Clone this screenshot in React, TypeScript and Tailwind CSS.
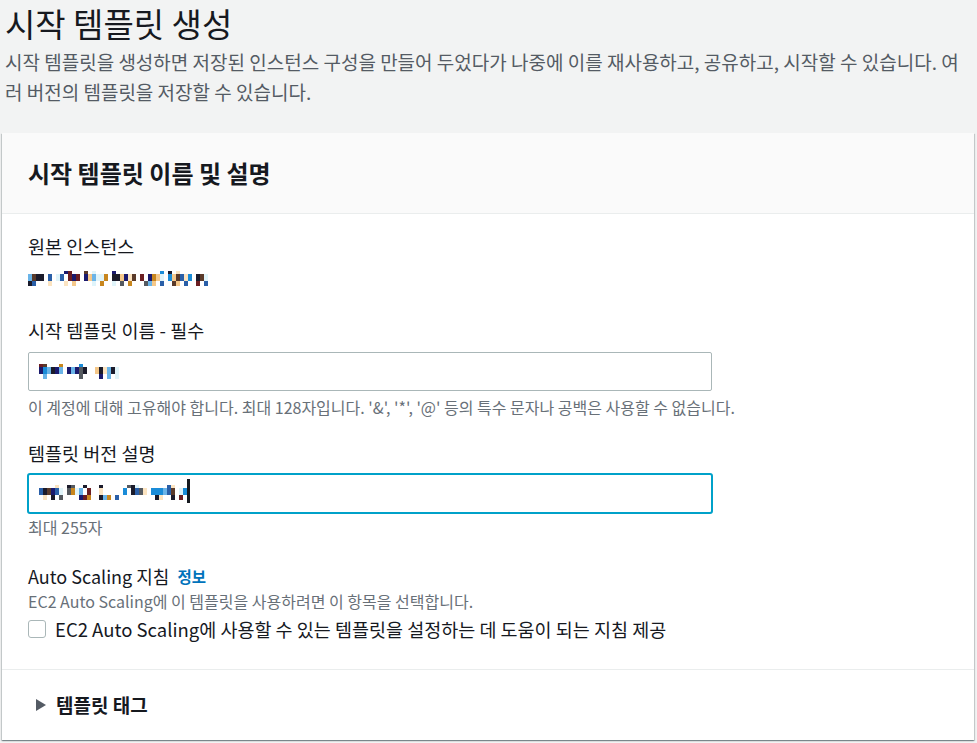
import React from 'react';

const PALETTE = [
  '#ffffff', '#1b1b2b', '#1a1a6e', '#1a8cd8', '#6ab4e8', '#f5c88a', '#c8861e',
  '#5a3a2a', '#e0f4fa', '#555a60', '#fbe3c0', '#6b1e22', '#2a5fa8', '#1b1b2b',
];

// blurred-out values in the screenshot, drawn as a little mosaic
const Mosaic: React.FC<{ seed: number; cols: number; cursor?: boolean }> = ({ seed, cols, cursor }) => {
  let s = seed;
  const rnd = () => {
    s = (s * 1103515245 + 12345) % 2147483648;
    return s / 2147483648;
  };
  const pick = () => PALETTE[Math.floor(rnd() * PALETTE.length)];
  const columns = Array.from({ length: cols }, (_, i) =>
    i % 7 === 6
      ? ['#ffffff', '#ffffff', '#ffffff']
      : [rnd() < 0.7 ? '#ffffff' : pick(), pick(), rnd() < 0.5 ? '#ffffff' : pick()],
  );
  return (
    <div className="flex items-start">
      {columns.map((c, i) => (
        <div key={i} className="flex flex-col w-[4px]">
          <div className="h-[3px]" style={{ backgroundColor: c[0] }} />
          <div className="h-[7px]" style={{ backgroundColor: c[1] }} />
          <div className="h-[5px]" style={{ backgroundColor: c[2] }} />
        </div>
      ))}
      {cursor && <div className="w-[3px] h-[24px] -mt-[6px] bg-[#16191f]" />}
    </div>
  );
};

export default function App() {
  const font = { fontFamily: '"Noto Sans CJK KR", "Noto Sans", sans-serif' };
  const label = 'text-[18.5px] leading-[24px] text-[#16191f]';
  const hint = 'text-[16px] leading-[20px] text-[#687078]';

  return (
    <div style={font} className="w-[977px] h-[743px] overflow-hidden bg-[#f2f3f3] px-[2px]">
      <h1 className="pl-[3px] text-[33px] leading-[46px] font-normal text-[#16191f]">시작 템플릿 생성</h1>
      <p className="mt-[1px] pl-[3px] pr-[10px] text-[19px] leading-[30px] text-[#545b64]">
        시작 템플릿을 생성하면 저장된 인스턴스 구성을 만들어 두었다가 나중에 이를 재사용하고, 공유하고, 시작할 수 있습니다. 여러 버전의 템플릿을 저장할 수 있습니다.
      </p>

      <div className="mt-[26px] w-[972px] bg-white shadow-[0_1px_1px_0_rgba(0,28,36,0.3),1px_1px_1px_0_rgba(0,28,36,0.15),-1px_1px_1px_0_rgba(0,28,36,0.15)]">
        <div className="h-[81px] flex items-center px-[26px] bg-[#fafafa] border-b border-[#eaeded]">
          <h2 className="text-[24px] font-bold text-[#16191f]">시작 템플릿 이름 및 설명</h2>
        </div>

        <div className="px-[26px] pt-[20px] pb-[28px]">
          <div className={label}>원본 인스턴스</div>
          <div className="mt-[13px] h-[16px]">
            <Mosaic seed={7} cols={45} />
          </div>

          <div className={`${label} mt-[31px]`}>시작 템플릿 이름 - 필수</div>
          <div className="mt-[10px] w-[684px] h-[39px] border border-[#aab7b8] rounded-[2px] flex items-center pl-[10px]">
            <Mosaic seed={31} cols={21} />
          </div>
          <div className={`${hint} mt-[6px]`}>
            이 계정에 대해 고유해야 합니다. 최대 128자입니다. '&amp;', '*', '@' 등의 특수 문자나 공백은 사용할 수 없습니다.
          </div>

          <div className={`${label} mt-[24px]`}>템플릿 버전 설명</div>
          <div className="mt-[8px] -ml-[1px] w-[686px] h-[41px] border-2 border-[#00a1c9] rounded-[3px] flex items-center pl-[10px]">
            <Mosaic seed={93} cols={37} cursor />
          </div>
          <div className={`${hint} mt-[3px]`}>최대 255자</div>

          <div className={`${label} mt-[27px] flex items-center gap-[8px]`}>
            <span className="text-[18px]">Auto Scaling 지침</span>
            <span className="text-[15.5px] font-bold text-[#0073bb]">정보</span>
          </div>
          <div className={`${hint} mt-[3px]`}>EC2 Auto Scaling에 이 템플릿을 사용하려면 이 항목을 선택합니다.</div>
          <label className="mt-[6px] flex items-center gap-[9px] text-[18.5px] leading-[24px] text-[#16191f]">
            <span className="w-[18px] h-[18px] border border-[#aab7b8] rounded-[3px] bg-white" />
            <span>EC2 Auto Scaling에 사용할 수 있는 템플릿을 설정하는 데 도움이 되는 지침 제공</span>
          </label>
        </div>

        <div className="h-[71px] border-t border-[#eaeded] flex items-center pl-[34px] gap-[10px]">
          <svg width="10" height="12" viewBox="0 0 10 12">
            <path d="M0 0 L10 6 L0 12 Z" fill="#545b64" />
          </svg>
          <span className="text-[19px] font-bold text-[#16191f]">템플릿 태그</span>
        </div>
      </div>
    </div>
  );
}
